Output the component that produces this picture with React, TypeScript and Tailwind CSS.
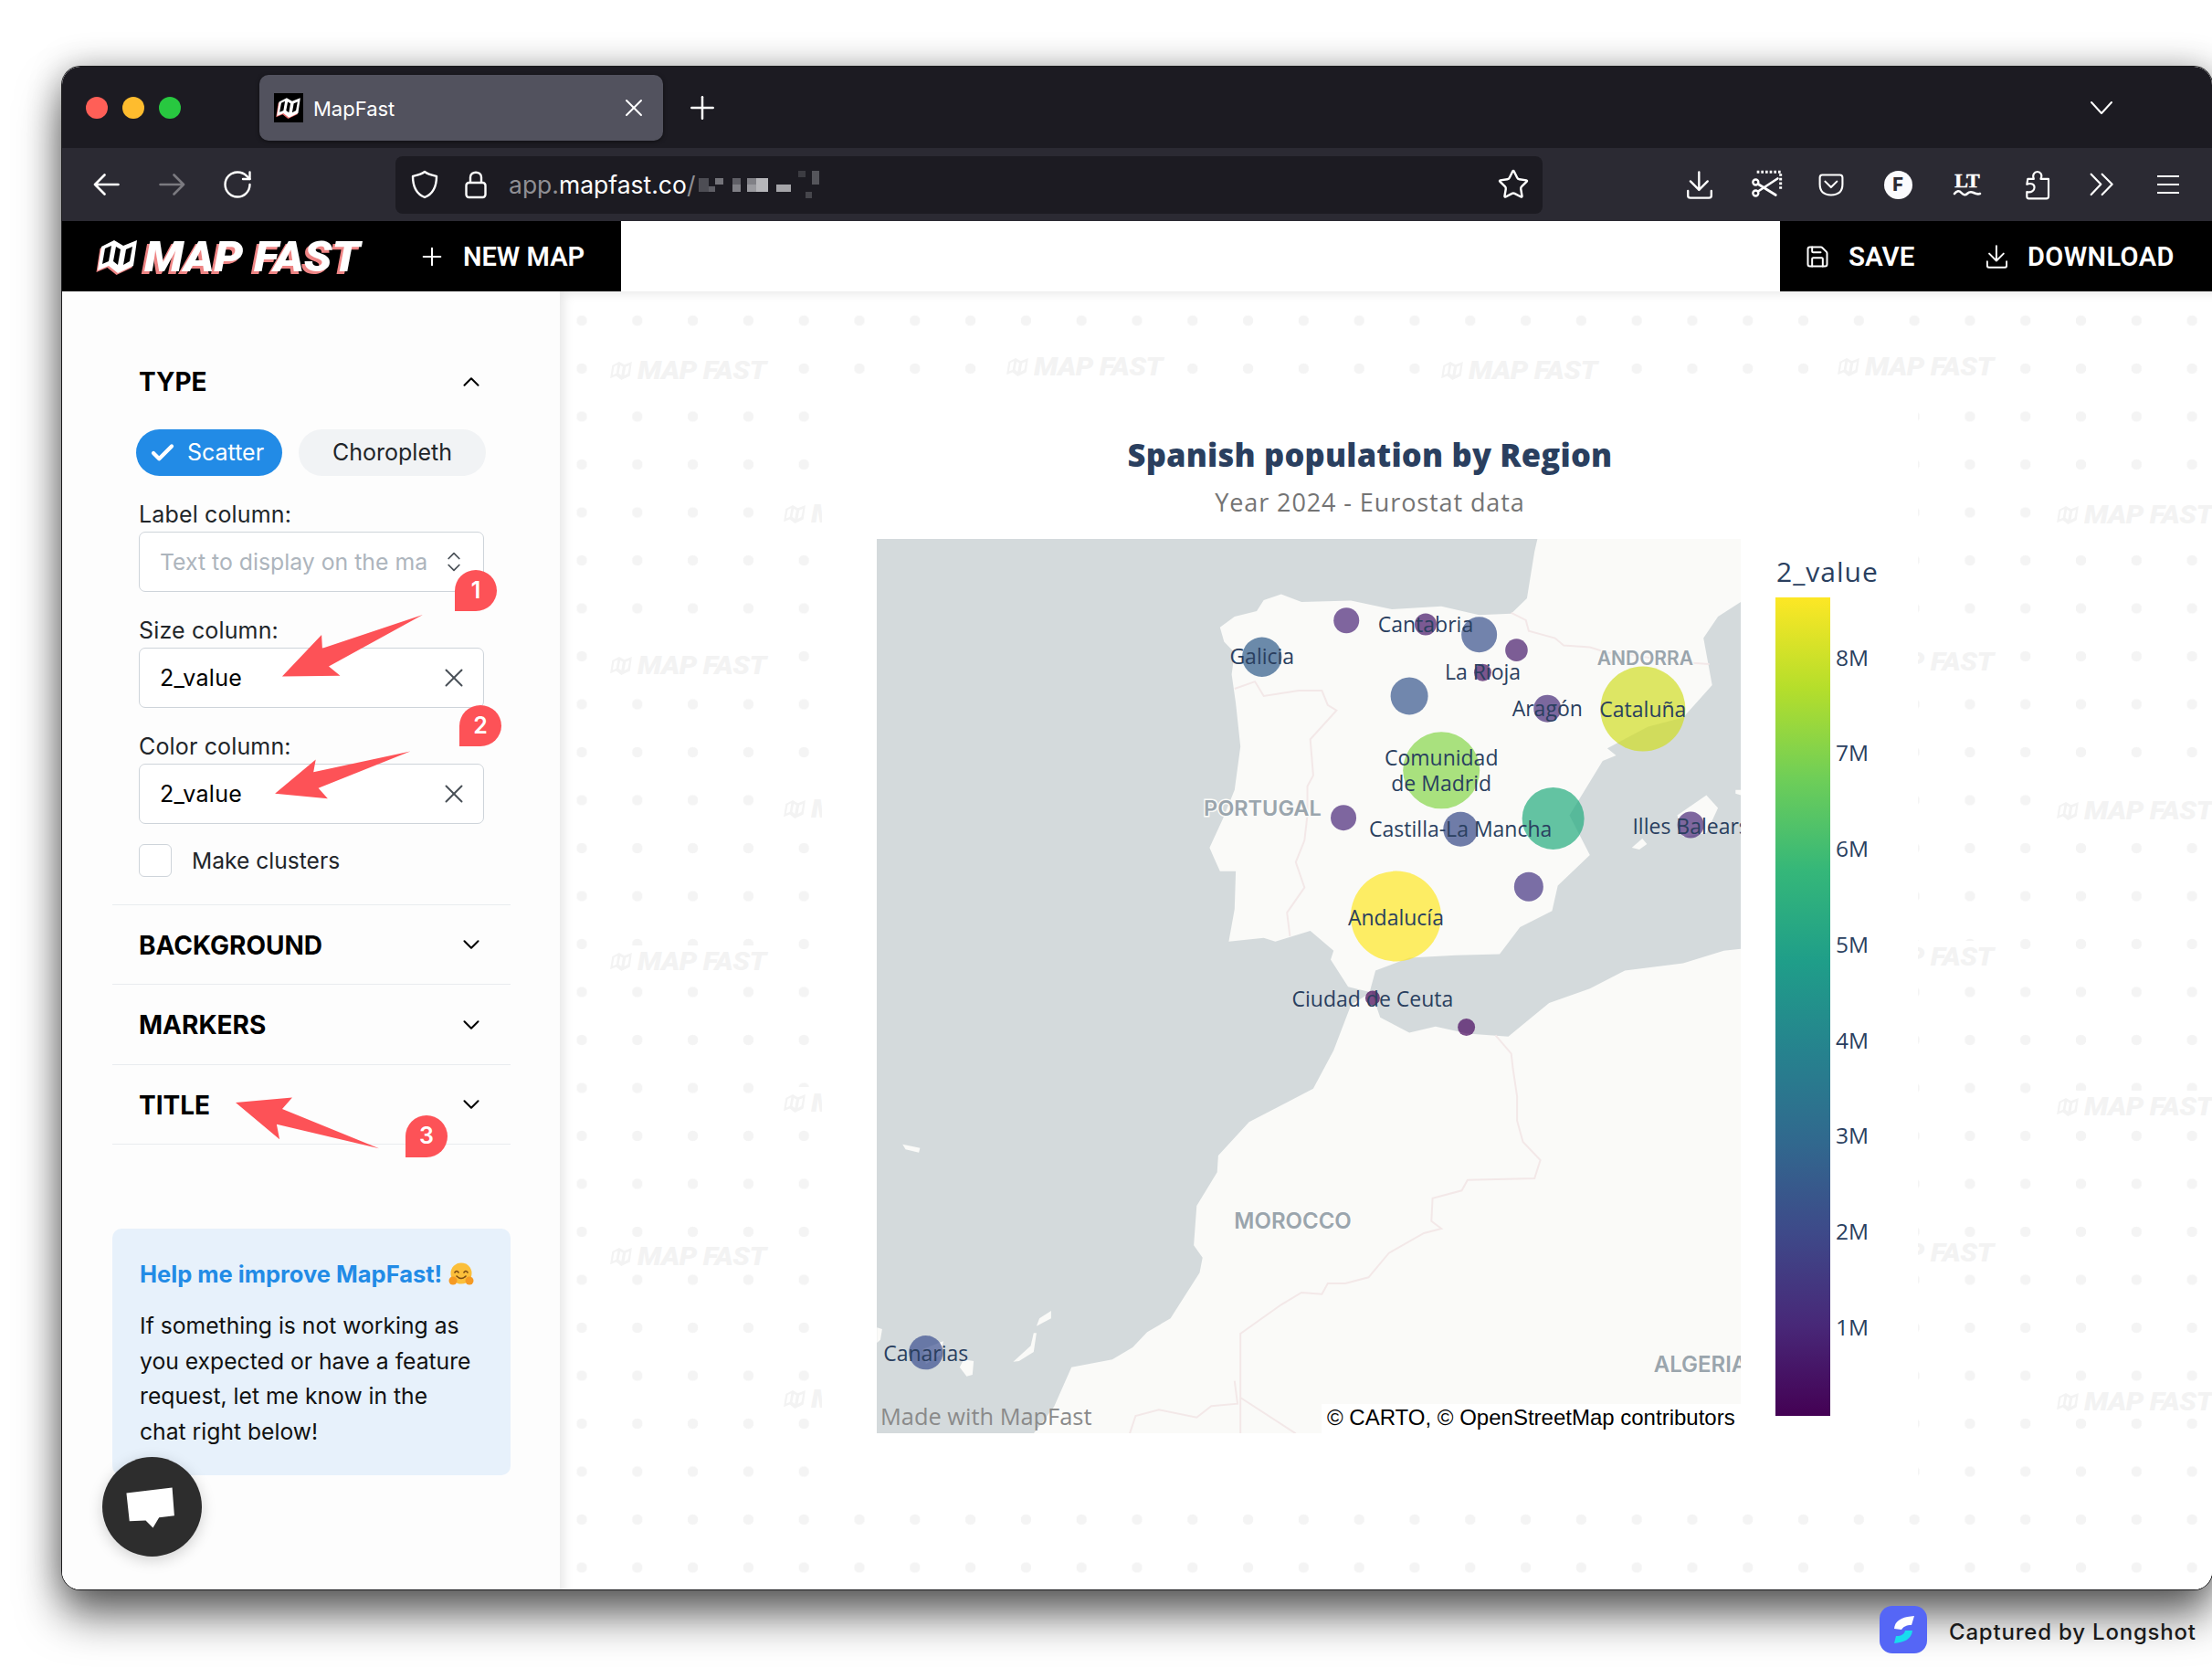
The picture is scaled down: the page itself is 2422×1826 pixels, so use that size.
import React from 'react';
import { RotateCw, Star, Plus, X, Save, ChevronUp, ChevronDown, ChevronsUpDown, Check } from 'lucide-react';

type P = [number, number];
const z5 = (p: P): P => [950 + p[0] / 1.568 - 960, 580 + p[1] / 2.529 - 590];
const z6 = (p: P): P => [950 + p[0] / 1.568 - 960, 1100 + p[1] / 3 - 590];
const z3 = (p: P): P => [60 + p[0] / 2.8, 340 + p[1] / 2.529];
const z4 = (p: P): P => [60 + p[0] / 2.45, 960 + p[1] / 1.81];
const str = (a: P[]) => a.map((p) => `${p[0].toFixed(1)},${p[1].toFixed(1)}`).join(' ');

const europe: P[] = [[1150,25],[1145,60],[1140,110],[1132,190],[1105,232],[1050,236],[985,212],[900,220],[830,196],[745,200],[710,178],[680,195],[668,225],[630,240],[605,270],[612,310],[630,340],[625,400],[632,480],[640,600],[630,720],[610,800],[587,880],[595,910],[605,945],[632,945],[630,1050],[620,1140],[680,1130],[700,1140],[760,1110],[800,1165],[795,1190],[825,1265],[862,1280],[872,1220],[930,1185],[1010,1178],[1085,1175],[1120,1100],[1175,1055],[1185,985],[1240,900],[1205,790],[1262,640],[1285,625],[1270,605],[1340,545],[1400,520],[1450,430],[1435,300],[1460,240],[1499,200],[1499,25]].map((p) => z5(p as P));
const africa: P[] = [
  ...([[865,1280],[880,1350],[930,1392],[975,1375],[1030,1395],[1100,1403],[1140,1350],[1170,1310],[1240,1270],[1300,1220],[1400,1200],[1470,1165],[1499,1160]] as P[]).map(z5),
  [946, 979],
  ...([[285,1408],[320,1320],[350,1190],[420,1165],[455,1125],[480,1075],[520,1030],[570,880],[575,830],[560,790],[565,660],[600,550],[602,495],[655,385],[720,320],[765,275],[800,150],[830,0]] as P[]).map(z6),
];
const islands5: P[][] = [
  [[1390,790],[1440,735],[1460,770],[1440,840],[1400,850]],
  [[1490,720],[1499,720],[1499,735],[1490,730]],
  [[1312,880],[1330,855],[1338,870],[1325,885]],
];
const islands6: P[][] = [
  [[250,1172],[280,1120],[285,1078],[290,1078],[285,1140],[260,1170]],
  [[290,1055],[295,1030],[315,1005],[315,1030]],
  [[158,1190],[165,1165],[182,1170],[180,1215],[170,1220]],
  [[95,1130],[130,1105],[125,1150],[100,1180]],
  [[16,1060],[25,1065],[22,1100],[16,1110]],
  [[60,458],[90,470],[88,485],[65,475]],
];
const borders5: P[][] = [
  [[1105,230],[1130,250],[1135,280],[1180,300],[1195,320],[1240,325],[1270,340],[1310,345],[1380,365],[1445,372]],
  [[630,440],[665,420],[680,460],[740,445],[780,445],[790,485],[805,500],[760,580],[765,680],[755,710],[755,790],[750,860],[735,920],[750,990],[720,1060],[725,1125]],
];
const borders6: P[][] = [
  [[1078,100],[1105,160],[1108,210],[1115,300],[1115,380],[1125,450],[1155,510],[1145,570],[1030,575],[1020,610],[970,635],[968,710],[985,735],[955,750],[895,815],[860,895],[820,915],[790,915],[780,950],[745,945],[710,985],[640,1080],[640,1408]],
  [[630,1235],[635,1310],[590,1318],[565,1355],[500,1330],[460,1350],[450,1408]],
  [[640,1290],[735,1408]],
];

const bubbles: { c: P; r: number; f: string }[] = [
  { c: z5([677,352]), r: 21.7, f: '#2e5a89' },
  { c: z5([822,251]), r: 14, f: '#4a2578' },
  { c: z5([958,262]), r: 12, f: '#441568' },
  { c: z5([1050,290]), r: 19.5, f: '#38508b' },
  { c: z5([1114,333]), r: 12.3, f: '#46196b' },
  { c: z5([1056,395]), r: 9.5, f: '#440f60' },
  { c: z5([930,460]), r: 20.5, f: '#36568d' },
  { c: z5([1167,495]), r: 15, f: '#452a78' },
  { c: z5([1331,496]), r: 46.5, f: '#d0dd25' },
  { c: z5([985,666]), r: 42, f: '#86d54a' },
  { c: z5([817,797]), r: 14, f: '#492779' },
  { c: z5([1018,829]), r: 19, f: '#334686' },
  { c: z5([1177,799]), r: 34, f: '#22ab7e' },
  { c: z5([1135,988]), r: 16, f: '#433281' },
  { c: z5([1413,817]), r: 14.5, f: '#482878' },
  { c: z5([907,1070]), r: 49.5, f: '#fde725' },
  { c: z5([867,1296]), r: 8, f: '#440154' },
  { c: z5([1028,1377]), r: 9.5, f: '#46065c' },
  { c: z6([100,1142]), r: 18.7, f: '#3b4f8e' },
];
const labels: { c: P; t: string }[] = [
  { c: z5([677,352]), t: 'Galicia' },
  { c: z5([958,262]), t: 'Cantabria' },
  { c: z5([1056,395]), t: 'La Rioja' },
  { c: z5([1167,495]), t: 'Aragón' },
  { c: z5([1331,498]), t: 'Cataluña' },
  { c: z5([985,632]), t: 'Comunidad' },
  { c: z5([985,703]), t: 'de Madrid' },
  { c: z5([1018,830]), t: 'Castilla-La Mancha' },
  { c: z5([1413,820]), t: 'Illes Balears' },
  { c: z5([907,1073]), t: 'Andalucía' },
  { c: z5([867,1298]), t: 'Ciudad de Ceuta' },
  { c: z6([100,1145]), t: 'Canarias' },
];

const MapLogo = ({ main, shade, hole, className }: { main: string; shade?: string; hole: string; className: string }) => {
  const body = '6,9 20,2 30,8 45,2 41,30 24,38 14,30 2,35';
  return (
    <svg viewBox="0 0 47 40" className={className}>
      {shade && (
        <g transform="translate(-1.5 2)">
          <polygon points={body} fill={shade} />
        </g>
      )}
      <polygon points={body} fill={main} />
      <polygon points="10,11 17,8 14,25 7,28" fill={hole} />
      <polygon points="22,9 27,12 24,29 19,25" fill={hole} />
      <polygon points="33,12 40,9 37,25 30,29" fill={hole} />
    </svg>
  );
};

const Watermark = ({ x, y }: { x: number; y: number }) => (
  <div className="absolute flex h-[36px] w-[180px] items-center gap-[5px] bg-white" style={{ left: x - 613, top: y - 319 - 18 }}>
    <MapLogo main="#f3f3f3" hole="#ffffff" className="h-[30px] w-[26px]" />
    <span className="origin-left scale-x-[1.1] whitespace-nowrap font-['Roboto',sans-serif] text-[28px] font-black italic tracking-[-0.5px] text-[#f3f3f3]">MAP FAST</span>
  </div>
);

const marks: [number, number][] = [
  [667,406],[1101,402],[1577,406],[2011,402],
  [667,729],[2011,725],[667,1053],[2011,1048],[667,1376],[2011,1372],
  [857,563],[857,886],[857,1208],[857,1532],
  [2251,564],[2251,888],[2251,1212],[2251,1535],
];

const BarIcon = ({ w, children }: { w: string; children: React.ReactNode }) => (
  <div className={`flex items-center justify-center text-white ${w}`}>{children}</div>
);

const ColumnField = ({ label, children }: { label: string; children: React.ReactNode }) => (
  <div className="pt-[24px]">
    <div className="h-[37px] font-['Inter',sans-serif] text-[25px] leading-[37px] tracking-[0.15px] text-[#212529]">{label}</div>
    <div className="flex h-[66px] items-center justify-between rounded-[7px] border-[1.5px] border-[#ced4da] bg-white pl-[22px] pr-[15px] text-[25px]">{children}</div>
  </div>
);

const SectionHead = ({ title, open, h }: { title: string; open?: boolean; h: string }) => (
  <div className={`flex items-center justify-between pl-[29px] pr-[28px] ${h}`}>
    <span className="pt-[1px] font-['Inter',sans-serif] text-[28px] font-bold text-black">{title}</span>
    {open ? <ChevronUp size={30} strokeWidth={1.6} className="text-black" /> : <ChevronDown size={30} strokeWidth={1.6} className="text-black" />}
  </div>
);

const Badge = ({ n, x, y, w, h }: { n: string; x: number; y: number; w: number; h: number }) => (
  <div
    className="absolute flex items-center justify-center rounded-[50%_50%_50%_0] bg-[#fd5257] font-['Inter',sans-serif] text-[25px] font-semibold text-white"
    style={{ left: x - 68, top: y - 73, width: w, height: h }}
  >
    {n}
  </div>
);

const arrows: P[][] = [
  ([[1128,842],[820,935],[818,898],[697,1013],[875,1011],[840,985]] as P[]).map(z3),
  ([[1090,1220],[793,1278],[800,1243],[675,1337],[837,1351],[808,1322]] as P[]).map(z3),
  ([[485,447],[637,437],[610,460],[870,538],[595,490],[603,520]] as P[]).map(z4),
];

const ticks = ['8M', '7M', '6M', '5M', '4M', '3M', '2M', '1M'];

const CloseField = () => (
  <span className="flex w-[34px] shrink-0 justify-center"><X size={34} strokeWidth={1.4} className="text-[#495057]" /></span>
);

export default function App() {
  return (
    <div className="relative h-[1826px] w-[2422px] overflow-hidden bg-white font-['Inter',sans-serif]">
      <div className="absolute left-[68px] top-[73px] h-[1667px] w-[2354px] rounded-[20px] shadow-[0_0_0_1px_#1b1b1d,0_28px_48px_rgba(0,0,0,0.6),0_0_36px_rgba(0,0,0,0.28)]">
        <div className="relative flex h-full w-full flex-col overflow-hidden rounded-[20px] bg-white">
          {/* tab strip */}
          <div className="flex h-[89px] shrink-0 items-center bg-[#1c1b22] pl-[26px]">
            <div className="flex w-[190px] shrink-0 gap-[16px]">
              <span className="h-[24px] w-[24px] rounded-full bg-[#ff5f57]" />
              <span className="h-[24px] w-[24px] rounded-full bg-[#febc2e]" />
              <span className="h-[24px] w-[24px] rounded-full bg-[#28c840]" />
            </div>
            <div className="flex h-[72px] w-[442px] shrink-0 items-center rounded-[10px] bg-[#52525e] pl-[16px] pr-[16px] shadow-[0_1px_4px_rgba(0,0,0,0.5)]">
              <div className="flex h-[32px] w-[32px] items-center justify-center bg-black">
                <MapLogo main="#ffffff" shade="#e86a6a" hole="#000000" className="h-[26px] w-[28px]" />
              </div>
              <span className="ml-[11px] flex-1 pt-[3px] text-[22px] text-white">MapFast</span>
              <X size={32} strokeWidth={1.5} className="text-white" />
            </div>
            <Plus size={40} strokeWidth={1.5} className="ml-[23px] text-white" />
            <svg viewBox="0 0 26 16" className="ml-auto mr-[108px] h-[16px] w-[26px]" fill="none" stroke="#fff" strokeWidth="2" strokeLinecap="round" strokeLinejoin="round">
              <polyline points="2,2 13,14 24,2" />
            </svg>
          </div>

          {/* toolbar */}
          <div className="flex h-[80px] shrink-0 items-center bg-[#2b2a33] pl-[12px] pr-[12px]">
            <div className="flex w-[72px] justify-center">
              <svg viewBox="0 0 29 24" className="h-[24px] w-[29px]" fill="none" stroke="#fff" strokeWidth="2.6" strokeLinecap="round" strokeLinejoin="round">
                <path d="M27.5 12 H2 M12.5 1.5 L2 12 L12.5 22.5" />
              </svg>
            </div>
            <div className="flex w-[72px] justify-center">
              <svg viewBox="0 0 29 24" className="h-[24px] w-[29px]" fill="none" stroke="#7b7a80" strokeWidth="2.6" strokeLinecap="round" strokeLinejoin="round">
                <path d="M1.5 12 H27 M16.5 1.5 L27 12 L16.5 22.5" />
              </svg>
            </div>
            <div className="flex w-[72px] justify-center"><RotateCw size={36} strokeWidth={1.6} className="text-white" /></div>
            <div className="ml-[137px] flex h-[63px] w-[1256px] shrink-0 items-center rounded-[8px] bg-[#1c1b22] pl-[17px] pr-[14px]">
              <svg viewBox="0 0 30 32" className="h-[32px] w-[30px]" fill="none" stroke="#fff" strokeWidth="2.4" strokeLinejoin="round">
                <path d="M15 2 C19 5 24 6 28 7 C28 18 25 26 15 30 C5 26 2 18 2 7 C6 6 11 5 15 2 Z" />
              </svg>
              <svg viewBox="0 0 24 32" className="ml-[29px] h-[32px] w-[24px]" fill="none" stroke="#fff" strokeWidth="2.4" strokeLinejoin="round">
                <rect x="1.5" y="14" width="21" height="16" rx="3" />
                <path d="M6 14 V8 C6 1 18 1 18 8 V14" />
              </svg>
              <div className="ml-[24px] flex items-center whitespace-nowrap pt-[2px] text-[26.5px]">
                <span className="text-[#8f8f94]">app.</span>
                <span className="text-white">mapfast.co</span>
                <span className="text-[#8f8f94]">/</span>
              </div>
              <svg viewBox="0 0 132 30" className="ml-[4px] h-[30px] w-[132px]">
                <rect x="0" y="8" width="11" height="15" fill="#4d4d54" />
                <rect x="11" y="17" width="7" height="6" fill="#5f5f66" />
                <rect x="18" y="8" width="9" height="7" fill="#74747a" />
                <rect x="37" y="8" width="9" height="7" fill="#5f5f66" />
                <rect x="37" y="15" width="9" height="8" fill="#808086" />
                <rect x="53" y="8" width="10" height="7" fill="#808086" />
                <rect x="53" y="15" width="10" height="8" fill="#9a9a9f" />
                <rect x="63" y="8" width="13" height="15" fill="#b6b6ba" />
                <rect x="85" y="15" width="16" height="8" fill="#a5a5a9" />
                <rect x="109" y="0" width="8" height="7" fill="#3c3c42" />
                <rect x="124" y="0" width="8" height="15" fill="#55555b" />
                <rect x="117" y="23" width="7" height="7" fill="#46464c" />
              </svg>
              <Star size={36} strokeWidth={1.6} className="ml-auto text-white" />
            </div>
            <div className="ml-auto flex h-full items-center">
              <BarIcon w="w-[86px]">
                <svg viewBox="24 32 82 92" className="h-[31px] w-[28px]" fill="none" stroke="#fff" strokeWidth="7" strokeLinecap="round" strokeLinejoin="round">
                  <path d="M63 36 V94 M35 66 L63 94 L91 66" />
                  <path d="M27 97 V113 Q27 120 35 120 H95 Q103 120 103 113 V97" />
                </svg>
              </BarIcon>
              <BarIcon w="w-[60px]">
                <svg viewBox="230 38 105 95" className="h-[32px] w-[35px]" fill="none" stroke="#fff" strokeWidth="7">
                  <path d="M250 44 H328 V102" strokeDasharray="8 6" strokeWidth="9" />
                  <circle cx="246" cy="78" r="9" />
                  <circle cx="246" cy="114" r="9" />
                  <path d="M254 84 L312 120 M254 108 L318 66" strokeLinecap="round" strokeWidth="8" />
                </svg>
              </BarIcon>
              <BarIcon w="w-[82px]">
                <svg viewBox="455 42 90 80" className="h-[27px] w-[29px]" fill="none" stroke="#fff" strokeWidth="6.5" strokeLinecap="round" strokeLinejoin="round">
                  <path d="M468 48 H528 Q537 48 537 57 V80 Q537 116 498 116 Q460 116 460 80 V57 Q460 48 468 48 Z" />
                  <polyline points="478,70 498,90 518,70" />
                </svg>
              </BarIcon>
              <BarIcon w="w-[64px]">
                <div className="flex h-[31px] w-[31px] items-center justify-center rounded-full bg-[#fbfbfe] text-[20px] font-extrabold text-[#2b2a33]">F</div>
              </BarIcon>
              <BarIcon w="w-[88px]">
                <svg viewBox="0 0 32 30" className="h-[30px] w-[32px]" fill="none">
                  <text x="16" y="18" textAnchor="middle" stroke="#fff" strokeWidth="0.5" className="fill-white font-['Liberation_Serif',serif] text-[22px] font-bold">LT</text>
                  <path d="M2 25 Q6 20 9.5 24 T16 25 T23 24 T30 25" stroke="#fff" strokeWidth="2.6" strokeLinecap="round" />
                </svg>
              </BarIcon>
              <BarIcon w="w-[66px]">
                <svg viewBox="260 30 85 100" className="h-[33px] w-[28px]" fill="none" stroke="#fff" strokeWidth="6.5" strokeLinejoin="round">
                  <path d="M270 60 H290 C284 46 292 36 302 36 C312 36 320 46 313 60 H339 V118 Q339 125 332 125 H273 Q267 125 267 118 V103 C284 107 292 96 292 88 C292 78 282 72 267 78 Z" />
                </svg>
              </BarIcon>
              <BarIcon w="w-[74px]">
                <svg viewBox="472 42 84 78" className="h-[26px] w-[28px]" fill="none" stroke="#fff" strokeWidth="6.5" strokeLinecap="round" strokeLinejoin="round">
                  <polyline points="480,47 512,80 480,114" />
                  <polyline points="516,47 549,80 516,114" />
                </svg>
              </BarIcon>
              <BarIcon w="w-[72px]">
                <div className="flex w-[24px] flex-col gap-[6.5px]">
                  <span className="h-[2.5px] bg-white" />
                  <span className="h-[2.5px] bg-white" />
                  <span className="h-[2.5px] bg-white" />
                </div>
              </BarIcon>
            </div>
          </div>

          {/* app header */}
          <div className="flex h-[77px] shrink-0">
            <div className="flex w-[612px] items-center bg-black pl-[37px]">
              <MapLogo main="#ffffff" shade="#ee8484" hole="#000000" className="h-[40px] w-[47px]" />
              <span className="ml-[6px] w-[238px] origin-left scale-x-[1.1] whitespace-nowrap font-['Roboto',sans-serif] text-[46px] font-black italic leading-none tracking-[-0.3px] text-white [text-shadow:-3px_3px_0_#ee8484]">MAP FAST</span>
              <Plus size={32} strokeWidth={1.5} className="ml-[61px] text-white" />
              <span className="ml-[18px] whitespace-nowrap pt-[2px] font-['Roboto',sans-serif] text-[29px] font-semibold text-white">NEW MAP</span>
            </div>
            <div className="flex-1 bg-white" />
            <div className="flex w-[473px] items-center bg-black pl-[27px]">
              <Save size={28} strokeWidth={1.7} className="text-white" />
              <span className="ml-[20px] w-[73px] pt-[2px] font-['Roboto',sans-serif] text-[29.5px] font-semibold text-white">SAVE</span>
              <svg viewBox="24 32 82 92" className="ml-[78px] h-[26px] w-[23px]" fill="none" stroke="#fff" strokeWidth="7" strokeLinecap="round" strokeLinejoin="round">
                <path d="M63 36 V94 M35 66 L63 94 L91 66" />
                <path d="M27 97 V113 Q27 120 35 120 H95 Q103 120 103 113 V97" />
              </svg>
              <span className="ml-[22px] pt-[2px] font-['Roboto',sans-serif] text-[29px] font-semibold tracking-[0.4px] text-white">DOWNLOAD</span>
            </div>
          </div>

          {/* body */}
          <div className="flex min-h-0 flex-1">
            <aside className="flex w-[545px] shrink-0 flex-col bg-[#fdfdfd] pl-[55px] pr-[54px] pt-[55px]">
              <div className="border-b-[1.5px] border-[#e9ecef] pb-[29px]">
                <SectionHead title="TYPE" open h="h-[87px]" />
                <div className="flex gap-[18px] pl-[26px] pt-[9px]">
                  <div className="flex h-[51px] w-[160px] items-center gap-[12px] rounded-full bg-[#228be6] pl-[14px] text-[25px] text-white">
                    <Check size={30} strokeWidth={3.4} />
                    <span className="pt-[1px]">Scatter</span>
                  </div>
                  <div className="flex h-[51px] w-[205px] items-center justify-center rounded-full bg-[#f1f3f5] pt-[1px] text-[25px] text-[#212529]">Choropleth</div>
                </div>
                <div className="pl-[29px] pr-[29px]">
                  <ColumnField label="Label column:">
                    <span className="overflow-hidden whitespace-nowrap pt-[2px] text-[24.8px] text-[#adb5bd]">Text to display on the ma</span>
                    <span className="flex w-[34px] shrink-0 justify-center"><ChevronsUpDown size={28} strokeWidth={1.5} className="text-[#495057]" /></span>
                  </ColumnField>
                  <ColumnField label="Size column:">
                    <span className="pt-[2px] tracking-[0.3px] text-black">2_value</span>
                    <CloseField />
                  </ColumnField>
                  <ColumnField label="Color column:">
                    <span className="pt-[2px] tracking-[0.3px] text-black">2_value</span>
                    <CloseField />
                  </ColumnField>
                  <div className="flex items-center pt-[21px]">
                    <span className="h-[36px] w-[36px] rounded-[6px] border-[1.5px] border-[#ced4da] bg-white" />
                    <span className="ml-[22px] pt-[1px] text-[24.6px] text-[#212529]">Make clusters</span>
                  </div>
                </div>
              </div>
              <div className="border-b-[1.5px] border-[#e9ecef]"><SectionHead title="BACKGROUND" h="h-[86.5px]" /></div>
              <div className="border-b-[1.5px] border-[#e9ecef]"><SectionHead title="MARKERS" h="h-[86.5px]" /></div>
              <div className="border-b-[1.5px] border-[#e9ecef]"><SectionHead title="TITLE" h="h-[86.5px]" /></div>
              <div className="mt-[92px] h-[270px] rounded-[10px] bg-[#e7f1fb] pl-[30px] pr-[10px] pt-[32px]">
                <div className="flex items-center gap-[7px] text-[25.5px] font-bold leading-[36px] text-[#228be6]">
                  <span>Help me improve MapFast!</span>
                  <svg viewBox="0 0 28 26" className="h-[26px] w-[28px]">
                    <circle cx="14" cy="12" r="11.5" fill="#fbbf3a" />
                    <path d="M7 11 Q9 8 11 11 M17 11 Q19 8 21 11" fill="none" stroke="#7a4a12" strokeWidth="1.6" strokeLinecap="round" />
                    <path d="M9 15 Q14 20 19 15" fill="none" stroke="#7a4a12" strokeWidth="1.6" strokeLinecap="round" />
                    <circle cx="5" cy="20" r="4.5" fill="#f59a23" />
                    <circle cx="23" cy="20" r="4.5" fill="#f59a23" />
                  </svg>
                </div>
                <p className="mt-[19px] text-[24.7px] leading-[38.5px] text-[#111]">
                  If something is not working as<br />you expected or have a feature<br />request, let me know in the<br />chat right below!
                </p>
              </div>
            </aside>

            <main className="relative min-w-0 flex-1 overflow-hidden bg-white bg-[radial-gradient(circle,#f4f4f4_5.5px,transparent_6px)] bg-[size:60.8px_52.5px] bg-[position:-6.4px_5.75px] shadow-[inset_14px_12px_12px_-10px_rgba(0,0,0,0.1)]">
              {marks.map(([x, y]) => (
                <Watermark key={`${x}-${y}`} x={x} y={y} />
              ))}
              <div className="relative ml-[287px] mt-[111px] h-[1190px] w-[1200px] bg-white pt-[46px]">
                <h1 className="text-center font-['Open_Sans',sans-serif] text-[34.5px] font-extrabold leading-[44px] tracking-[0.2px] text-[#2a3f5f]">Spanish population by Region</h1>
                <p className="mt-[10px] text-center font-['Open_Sans',sans-serif] text-[27px] leading-[40px] tracking-[0.9px] text-[#747474]">Year 2024 - Eurostat data</p>
                <div className="ml-[60px] mt-[20px] flex items-start">
                  <svg viewBox="0 0 946 979" className="h-[979px] w-[946px] shrink-0 bg-[#d4dadc]">
                    <polygon points={str(europe)} fill="#fafaf8" />
                    <polygon points={str(africa)} fill="#fafaf8" />
                    {islands5.map((a, i) => <polygon key={i} points={str(a.map(z5))} fill="#fafaf8" />)}
                    {islands6.map((a, i) => <polygon key={i} points={str(a.map(z6))} fill="#fafaf8" />)}
                    {borders5.map((a, i) => <polyline key={i} points={str(a.map(z5))} fill="none" stroke="#f3e8e8" strokeWidth="2" />)}
                    {borders6.map((a, i) => <polyline key={i} points={str(a.map(z6))} fill="none" stroke="#f3e8e8" strokeWidth="2" />)}
                    <g stroke="#fafaf8" strokeWidth="3" paintOrder="stroke" textAnchor="middle" className="fill-[#9aa5ad] font-['Inter',sans-serif] font-semibold">
                      <text x={z5([678,770])[0]} y={z5([678,770])[1]} dy="0.36em" className="text-[23.5px]">PORTUGAL</text>
                      <text x={z5([1335,355])[0]} y={z5([1335,355])[1]} dy="0.36em" className="text-[21px]">ANDORRA</text>
                      <text x={z6([730,708])[0]} y={z6([730,708])[1]} dy="0.36em" className="text-[24px]">MOROCCO</text>
                      <text x={z6([1430,1180])[0]} y={z6([1430,1180])[1]} dy="0.36em" className="text-[24px]">ALGERIA</text>
                    </g>
                    {bubbles.map((b, i) => <circle key={i} cx={b.c[0]} cy={b.c[1]} r={b.r} fill={b.f} fillOpacity={0.7} />)}
                    {labels.map((l) => (
                      <text key={l.t} x={l.c[0]} y={l.c[1]} dy="0.36em" textAnchor="middle" className="fill-[#2a3f5f] font-['Open_Sans',sans-serif] text-[23px]">{l.t}</text>
                    ))}
                    <text x="4" y="970" className="fill-[#8a8a8a] font-['Open_Sans',sans-serif] text-[25.4px]">Made with MapFast</text>
                    <rect x="487" y="947" width="459" height="32" fill="#ffffff" />
                    <text x="493" y="970" className="fill-black font-['Liberation_Sans',sans-serif] text-[24px]">© CARTO, © OpenStreetMap contributors</text>
                  </svg>
                  <div className="ml-[38px] pt-[20px]">
                    <div className="h-[32px] pl-[1px] font-['Open_Sans',sans-serif] text-[30px] leading-[32px] tracking-[1px] text-[#2a3f5f]">2_value</div>
                    <div className="mt-[12px] flex">
                      <div className="h-[896px] w-[60px] bg-[linear-gradient(to_top,#440154,#482878,#3e4989,#31688e,#26828e,#1f9e89,#35b779,#6ece58,#b5de2b,#fde725)]" />
                      <div className="ml-[6px] pt-[13.5px]">
                        {ticks.map((t) => (
                          <div key={t} className="flex h-[104.75px] items-center font-['Open_Sans',sans-serif] text-[24.5px] text-[#2a3f5f]">{t}</div>
                        ))}
                      </div>
                    </div>
                  </div>
                </div>
              </div>
            </main>
          </div>

          {/* chat launcher */}
          <div className="absolute bottom-[36px] left-[44px] h-[109px] w-[109px] rounded-full bg-[#2d2d2d] shadow-[0_4px_16px_rgba(0,0,0,0.18)]">
            <svg viewBox="36 30 326 326" className="h-full w-full">
              <polygon points="115,148 265,130 272,222 222,228 202,262 178,238 125,240" fill="#fff" />
            </svg>
          </div>

          {/* annotations */}
          <svg viewBox="68 73 2354 1667" className="pointer-events-none absolute left-0 top-0 h-[1667px] w-[2354px]">
            {arrows.map((a, i) => <polygon key={i} points={str(a)} fill="#fd5257" />)}
          </svg>
          <Badge n="1" x={498} y={624} w={46} h={45} />
          <Badge n="2" x={503} y={772} w={46} h={45} />
          <Badge n="3" x={444} y={1221} w={46} h={46} />
        </div>
      </div>

      {/* capture tag */}
      <div className="absolute left-[2058px] top-[1758px] flex h-[52px] items-center">
        <div className="flex h-[52px] w-[52px] items-center justify-center rounded-[14px] bg-[#5566f6]">
          <svg viewBox="0 0 52 52" className="h-[52px] w-[52px]">
            <path d="M16 25 C17 15 26 12 38 11 L35 21 C29 21 26 23 24 26 Z" fill="#fff" />
            <path d="M36 27 C35 37 26 40 16 41 L18 33 C24 33 27 31 28 27 Z" fill="#18dcee" />
          </svg>
        </div>
        <span className="ml-[24px] whitespace-nowrap pt-[6px] font-['Inter',sans-serif] text-[24px] font-medium tracking-[0.8px] text-[#1a1a1a]">Captured by Longshot</span>
      </div>
    </div>
  );
}
